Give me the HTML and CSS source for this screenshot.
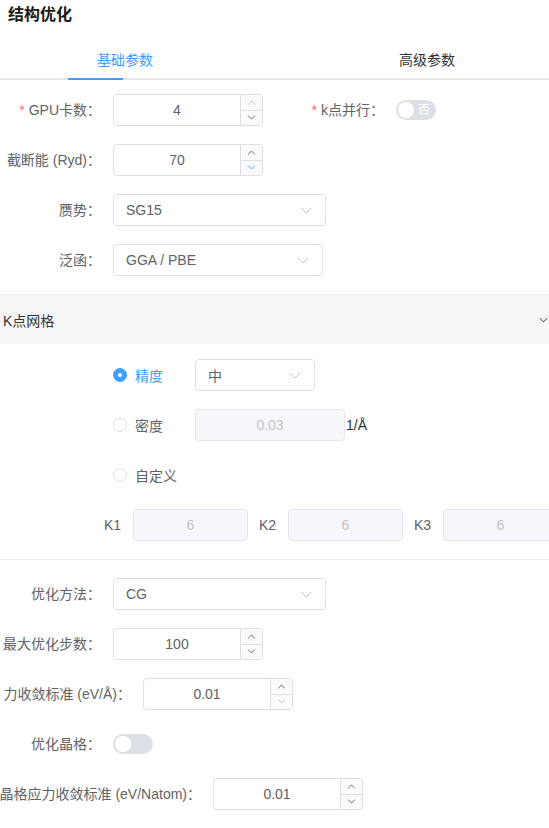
FILE: index.html
```html
<!DOCTYPE html>
<html lang="zh-CN">
<head>
<meta charset="utf-8">
<title>结构优化</title>
<link rel="stylesheet" href="styles.css">
</head>
<body>
<div class="title">结构优化</div>
<div class="tabs">
  <div class="tab-nav">
    <div class="tab active">基础参数</div>
    <div class="tab">高级参数</div>
    <div class="tab-bar"></div>
  </div>
  <div class="pane">
    <div class="row two">
      <div class="item">
        <label class="label"><span class="req">*</span>GPU卡数：</label>
        <div class="num">
          <div class="num-val">4</div>
          <div class="num-ctrl">
            <span class="ctl dis"><svg viewBox="0 0 10 6" width="9" height="5"><path d="M1 5.2L5 1.2L9 5.2" /></svg></span>
            <span class="ctl"><svg viewBox="0 0 10 6" width="9" height="5"><path d="M1 0.8L5 4.8L9 0.8" /></svg></span>
          </div>
        </div>
      </div>
      <div class="item">
        <label class="label col2"><span class="req">*</span>k点并行：</label>
        <div class="switch"><span class="knob"></span><span class="sw-text">否</span></div>
      </div>
    </div>

    <div class="row">
      <label class="label">截断能 (Ryd)：</label>
      <div class="num">
        <div class="num-val">70</div>
        <div class="num-ctrl">
          <span class="ctl"><svg viewBox="0 0 10 6" width="9" height="5"><path d="M1 5.2L5 1.2L9 5.2" /></svg></span>
          <span class="ctl hover"><svg viewBox="0 0 10 6" width="9" height="5"><path d="M1 0.8L5 4.8L9 0.8" /></svg></span>
        </div>
      </div>
    </div>

    <div class="row">
      <label class="label">赝势：</label>
      <div class="select w213"><span>SG15</span><svg class="sel-arrow" viewBox="0 0 12 7" width="12" height="7"><path d="M1 1L6 6L11 1" /></svg></div>
    </div>

    <div class="row">
      <label class="label">泛函：</label>
      <div class="select w210"><span>GGA / PBE</span><svg class="sel-arrow" viewBox="0 0 12 7" width="12" height="7"><path d="M1 1L6 6L11 1" /></svg></div>
    </div>

    <div class="collapse">
      <div class="collapse-head">
        <span>K点网格</span>
        <svg class="col-arrow" viewBox="0 0 10 6" width="9" height="6"><path d="M1 1L5 5L9 1" /></svg>
      </div>
      <div class="collapse-body">
        <div class="krow">
          <div class="radio checked"><span class="r-dot"></span><span class="r-text">精度</span></div>
          <div class="select w120"><span>中</span><svg class="sel-arrow" viewBox="0 0 12 7" width="12" height="7"><path d="M1 1L6 6L11 1" /></svg></div>
        </div>
        <div class="krow">
          <div class="radio"><span class="r-dot"></span><span class="r-text">密度</span></div>
          <div class="input disabled w150">0.03</div>
          <span class="unit">1/Å</span>
        </div>
        <div class="krow">
          <div class="radio"><span class="r-dot"></span><span class="r-text">自定义</span></div>
        </div>
        <div class="kgrid">
          <div class="kcell"><span class="klabel">K1</span><div class="input disabled w115">6</div></div>
          <div class="kcell"><span class="klabel">K2</span><div class="input disabled w115">6</div></div>
          <div class="kcell"><span class="klabel">K3</span><div class="input disabled w115">6</div></div>
        </div>
      </div>
    </div>

    <div class="row">
      <label class="label">优化方法：</label>
      <div class="select w213"><span>CG</span><svg class="sel-arrow" viewBox="0 0 12 7" width="12" height="7"><path d="M1 1L6 6L11 1" /></svg></div>
    </div>

    <div class="row">
      <label class="label">最大优化步数：</label>
      <div class="num">
        <div class="num-val">100</div>
        <div class="num-ctrl">
          <span class="ctl"><svg viewBox="0 0 10 6" width="9" height="5"><path d="M1 5.2L5 1.2L9 5.2" /></svg></span>
          <span class="ctl"><svg viewBox="0 0 10 6" width="9" height="5"><path d="M1 0.8L5 4.8L9 0.8" /></svg></span>
        </div>
      </div>
    </div>

    <div class="row">
      <label class="label l143">力收敛标准 (eV/Å)：</label>
      <div class="num">
        <div class="num-val">0.01</div>
        <div class="num-ctrl">
          <span class="ctl"><svg viewBox="0 0 10 6" width="9" height="5"><path d="M1 5.2L5 1.2L9 5.2" /></svg></span>
          <span class="ctl dis"><svg viewBox="0 0 10 6" width="9" height="5"><path d="M1 0.8L5 4.8L9 0.8" /></svg></span>
        </div>
      </div>
    </div>

    <div class="row">
      <label class="label">优化晶格：</label>
      <div class="switch"><span class="knob"></span></div>
    </div>

    <div class="row">
      <label class="label l213">晶格应力收敛标准 (eV/Natom)：</label>
      <div class="num">
        <div class="num-val">0.01</div>
        <div class="num-ctrl">
          <span class="ctl"><svg viewBox="0 0 10 6" width="9" height="5"><path d="M1 5.2L5 1.2L9 5.2" /></svg></span>
          <span class="ctl"><svg viewBox="0 0 10 6" width="9" height="5"><path d="M1 0.8L5 4.8L9 0.8" /></svg></span>
        </div>
      </div>
    </div>
  </div>
</div>
</body>
</html>
```
FILE: styles.css
```css
* { box-sizing: border-box; }
html, body { margin: 0; padding: 0; }
body {
  width: 549px;
  overflow: hidden;
  background: #fff;
  font-family: "Liberation Sans", "Noto Sans CJK SC", sans-serif;
  font-size: 14px;
  color: #606266;
}
.title {
  height: 42px;
  padding: 3px 8px 0;
  line-height: 24px;
  font-size: 16px;
  font-weight: bold;
  color: #1a1a1a;
}
.tab-nav {
  position: relative;
  display: flex;
  height: 38px;
  border-bottom: 2px solid #e4e7ed;
  padding-left: 97px;
  gap: 246px;
}
.tab {
  line-height: 37px;
  font-size: 14px;
  color: #303133;
}
.tab.active { color: #409eff; }
.tab-bar {
  position: absolute;
  left: 68px;
  bottom: -2px;
  width: 55px;
  height: 2px;
  background: #409eff;
}
.pane { padding-top: 14px; }
.row {
  display: flex;
  align-items: center;
  height: 32px;
  margin-bottom: 18px;
}
.row.two {
  display: grid;
  grid-template-columns: 274px 1fr;
}
.item { display: flex; align-items: center; height: 32px; }
.label {
  flex: none;
  width: 113px;
  padding-right: 12px;
  display: flex;
  justify-content: flex-end;
  white-space: nowrap;
  line-height: 32px;
  color: #606266;
}
.label.col2 { width: 122px; }
.label.l143 { width: 143px; }
.label.l213 { width: 213px; }
.req { color: #f56c6c; margin-right: 4px; }

/* number input */
.num {
  display: flex;
  width: 150px;
  height: 32px;
  border: 1px solid #dcdfe6;
  border-radius: 4px;
  overflow: hidden;
  background: #fff;
}
.num-val {
  flex: 1;
  text-align: center;
  line-height: 30px;
  color: #606266;
}
.num-ctrl {
  width: 22px;
  display: flex;
  flex-direction: column;
  border-left: 1px solid #dcdfe6;
  background: #fafafa;
}
.ctl {
  flex: 1;
  display: flex;
  align-items: center;
  justify-content: center;
  color: #606266;
}
.ctl + .ctl { border-top: 1px solid #dcdfe6; }
.ctl svg path { fill: none; stroke: currentColor; stroke-width: 1.1; }
.ctl.dis { color: #c0c4cc; }
.ctl.hover { color: #409eff; }

/* select */
.select {
  display: flex;
  align-items: center;
  justify-content: space-between;
  height: 32px;
  padding: 0 13px 0 12px;
  border: 1px solid #dcdfe6;
  border-radius: 4px;
  color: #606266;
  background: #fff;
}
.w213 { width: 213px; }
.w210 { width: 210px; }
.w120 { width: 120px; }
.w150 { width: 150px; }
.w115 { width: 115px; }
.sel-arrow path { fill: none; stroke: #c0c4cc; stroke-width: 1; }

/* switch */
.switch {
  position: relative;
  width: 40px;
  height: 20px;
  border-radius: 10px;
  background: #dcdfe6;
  display: flex;
  align-items: center;
  justify-content: flex-end;
  padding-right: 6px;
}
.knob {
  position: absolute;
  left: 2px;
  top: 2px;
  width: 16px;
  height: 16px;
  border-radius: 50%;
  background: #fff;
}
.sw-text {
  font-size: 12px;
  line-height: 20px;
  color: #fff;
}

/* collapse */
.collapse {
  border-top: 1px solid #ebeef5;
  border-bottom: 1px solid #ebeef5;
  margin-bottom: 18px;
}
.collapse-head {
  display: flex;
  align-items: center;
  justify-content: space-between;
  height: 49px;
  padding: 0 1px 0 3px;
  background: #f7f7f7;
  color: #303133;
  font-size: 14px;
}
.col-arrow path { fill: none; stroke: #303133; stroke-width: 1.1; }
.collapse-body {
  padding: 15px 0 18px 113px;
  overflow: hidden;
  display: flex;
  flex-direction: column;
  gap: 18px;
}
.krow {
  display: flex;
  align-items: center;
  height: 32px;
}
.radio {
  width: 82px;
  display: flex;
  align-items: center;
  gap: 8px;
}
.r-dot {
  width: 14px;
  height: 14px;
  border-radius: 50%;
  border: 1px solid #dcdfe6;
  background: #fff;
  display: flex;
  align-items: center;
  justify-content: center;
}
.radio.checked .r-dot { background: #409eff; border-color: #409eff; }
.radio.checked .r-dot::after {
  content: "";
  width: 4px;
  height: 4px;
  border-radius: 50%;
  background: #fff;
}
.r-text { color: #606266; }
.radio.checked .r-text { color: #409eff; }
.input {
  height: 32px;
  border: 1px solid #dcdfe6;
  border-radius: 4px;
  text-align: center;
  line-height: 30px;
}
.input.disabled {
  background: #f5f7fa;
  border-color: #e4e7ed;
  color: #c0c4cc;
}
.unit { margin-left: 1px; color: #303133; }
.kgrid {
  display: flex;
  margin-left: -20px;
  height: 32px;
}
.kcell {
  flex: none;
  display: flex;
  align-items: center;
  width: 155px;
}
.klabel {
  width: 40px;
  padding-right: 12px;
  text-align: right;
  color: #606266;
}
```
